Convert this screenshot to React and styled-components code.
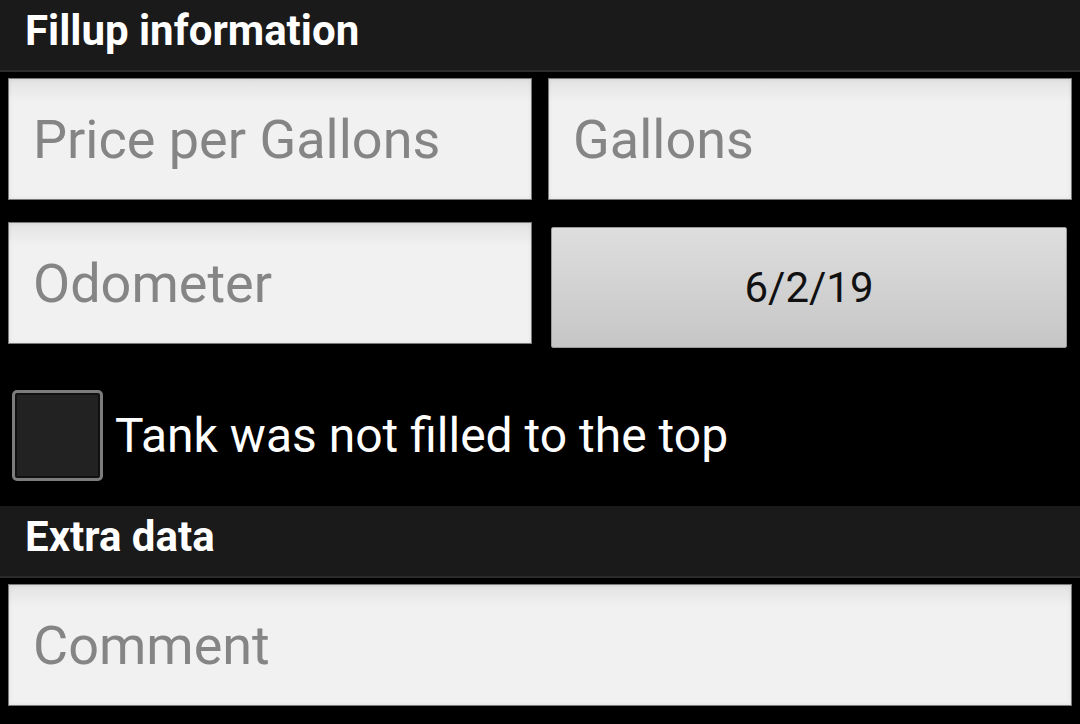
import styled, { createGlobalStyle } from 'styled-components';

const GlobalStyle = createGlobalStyle`
  body {
    margin: 0;
    background: #000;
    font-family: Roboto, "Noto Sans", sans-serif;
  }
`;

const Screen = styled.div`
  width: 1080px;
  height: 724px;
  background: #000;
  overflow: hidden;
`;

const SectionHeader = styled.div`
  height: 72px;
  box-sizing: border-box;
  background: #1a1a1a;
  border-bottom: 2px solid #2b2b2b;
  display: flex;
  align-items: center;
  padding: 0 0 10px 25px;
  color: #fff;
  font-weight: 700;
  font-size: 42px;
`;

const FieldGrid = styled.div`
  display: grid;
  grid-template-columns: 1fr 1fr;
  column-gap: 16px;
  row-gap: 22px;
  padding: 6px 8px 0;
`;

const Field = styled.div`
  height: 122px;
  box-sizing: border-box;
  background: linear-gradient(#e2e2e2, #f1f1f1 22px, #f1f1f1);
  border: 1px solid #7a7a7a;
  box-shadow: inset 0 0 4px rgba(0, 0, 0, 0.08);
  display: flex;
  align-items: center;
  padding-left: 24px;
  color: #858585;
  font-size: 54px;
  ${(p) => p.$wide && 'margin: 6px 8px 0;'}
`;

const DateButton = styled.button`
  height: 121px;
  margin: 5px 5px 0 3px;
  border: 1px solid #9a9a9a;
  border-radius: 2px;
  background: linear-gradient(#dedede, #c6c6c6);
  font-family: Roboto, "Noto Sans", sans-serif;
  font-size: 42px;
  color: #111;
  padding: 0;
`;

const CheckRow = styled.label`
  display: flex;
  align-items: center;
  gap: 12px;
  margin: 42px 0 25px 12px;
  height: 91px;
  color: #fff;
  font-size: 48px;
`;

const CheckBox = styled.span`
  width: 91px;
  height: 91px;
  box-sizing: border-box;
  border: 3px solid #7c7c7c;
  border-radius: 5px;
  background: #222;
  box-shadow: inset 0 0 0 2px #111;
`;

export default function App() {
  return (
    <Screen>
      <GlobalStyle />
      <SectionHeader>Fillup information</SectionHeader>
      <FieldGrid>
        <Field>Price per Gallons</Field>
        <Field>Gallons</Field>
        <Field>Odometer</Field>
        <DateButton>6/2/19</DateButton>
      </FieldGrid>
      <CheckRow>
        <CheckBox />
        Tank was not filled to the top
      </CheckRow>
      <SectionHeader>Extra data</SectionHeader>
      <Field $wide>Comment</Field>
    </Screen>
  );
}
